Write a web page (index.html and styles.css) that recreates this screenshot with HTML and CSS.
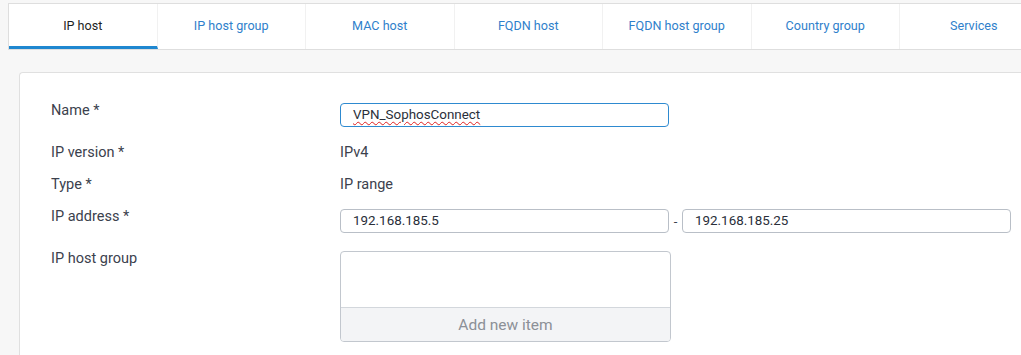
FILE: index.html
```html
<!DOCTYPE html>
<html>
<head>
<meta charset="utf-8">
<link rel="stylesheet" href="styles.css">
</head>
<body>
<div class="page">
  <nav class="tabs">
    <div class="tab active">IP host</div>
    <div class="tab">IP host group</div>
    <div class="tab">MAC host</div>
    <div class="tab">FQDN host</div>
    <div class="tab">FQDN host group</div>
    <div class="tab">Country group</div>
    <div class="tab">Services</div>
  </nav>
  <section class="card">
    <div class="form">
      <div class="label">Name *</div>
      <div class="field"><div class="input focus"><span class="spell">VPN_SophosConnect</span></div></div>

      <div class="label">IP version *</div>
      <div class="value">IPv4</div>

      <div class="label">Type *</div>
      <div class="value">IP range</div>

      <div class="label">IP address *</div>
      <div class="field range">
        <div class="input">192.168.185.5</div>
        <span class="dash">-</span>
        <div class="input">192.168.185.25</div>
      </div>

      <div class="label">IP host group</div>
      <div class="field">
        <div class="listbox">
          <div class="list-body"></div>
          <div class="list-add">Add new item</div>
        </div>
      </div>
    </div>
  </section>
</div>
</body>
</html>
```
FILE: styles.css
```css
html, body {
  margin: 0;
  padding: 0;
  background: #f7f7f7;
  overflow: hidden;
}
body {
  width: 1021px;
  height: 355px;
  font-family: Roboto, "Liberation Sans", sans-serif;
  font-size: 13px;
  color: #3b414d;
}
.page {
  padding: 3px 0 0 8px;
  height: 352px;
  overflow: hidden;
}
.tabs {
  display: flex;
  width: 1013px;
  overflow: hidden;
  height: 45px;
  background: #fff;
  border: 1px solid #dedede;
  border-right: none;
}
.tab {
  flex: 0 0 148.5px;
  display: flex;
  align-items: center;
  justify-content: center;
  font-size: 12.6px;
  color: #2f7fcb;
  border-right: 1px solid #f1f1f1;
  box-sizing: border-box;
  padding-bottom: 2px;
}
.tab.active {
  color: #1d1f24;
  border-bottom: 3px solid #1f87d0;
  padding-bottom: 0;
}
.card {
  margin: 22px 0 0 11px;
  width: 1010px;
  height: 300px;
  background: #fff;
  border: 1px solid #e0e0e0;
  border-right: none;
  border-radius: 4px 0 0 0;
  box-sizing: border-box;
  padding: 30px 0 0 31px;
}
.form {
  display: grid;
  grid-template-columns: 289px 680px;
  row-gap: 18px;
  align-items: start;
}
.label, .value {
  font-size: 14.5px;
  line-height: 14px;
  padding-top: 1px;
  margin-bottom: -1px;
  color: #3b414d;
}
.field { display: flex; align-items: center; }
.input {
  box-sizing: border-box;
  width: 329px;
  height: 24px;
  border: 1px solid #b9bfc7;
  border-radius: 4px;
  padding: 0 12px;
  font-size: 13.4px;
  line-height: 22px;
  color: #2a2f3a;
  background: #fff;
}
.input.focus { border-color: #2e8ad0; }
.spell {
  text-decoration: underline wavy #e02020;
  text-decoration-thickness: 1px;
  text-underline-offset: 2px;
}
.dash {
  width: 13px;
  text-align: center;
  color: #3b414d;
}
.listbox {
  box-sizing: border-box;
  width: 331px;
  height: 91px;
  border: 1px solid #c2c7ce;
  border-radius: 4px;
  overflow: hidden;
  display: flex;
  flex-direction: column;
}
.list-body { height: 55px; border-bottom: 1px solid #d3d7dc; }
.list-add {
  flex: 1;
  background: #f3f4f6;
  color: #8c9097;
  font-size: 15.5px;
  display: flex;
  align-items: center;
  justify-content: center;
}
```
